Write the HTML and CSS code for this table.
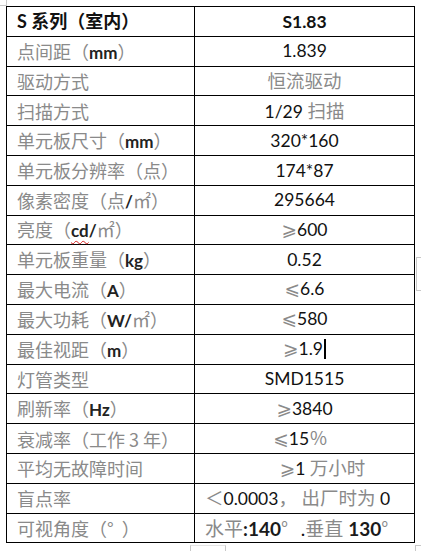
FILE: index.html
```html
<!DOCTYPE html>
<html lang="zh-CN">
<head>
<meta charset="utf-8">
<title>S 系列（室内）</title>
<link rel="stylesheet" href="styles.css">
</head>
<body>
<div class="page">
  <span class="handle"></span>
  <table class="spec">
    <colgroup><col class="c1"><col class="c2"></colgroup>
    <tr><td class="k head">S 系列（室内）</td><td class="v head">S1.83</td></tr>
    <tr><td class="k">点间距（<span class="en">mm</span>）</td><td class="v">1.839</td></tr>
    <tr><td class="k">驱动方式</td><td class="v"><span class="g">恒流驱动</span></td></tr>
    <tr><td class="k">扫描方式</td><td class="v">1/29 <span class="g">扫描</span></td></tr>
    <tr><td class="k">单元板尺寸（<span class="en">mm</span>）</td><td class="v">320*160</td></tr>
    <tr><td class="k">单元板分辨率（点）</td><td class="v">174*87</td></tr>
    <tr><td class="k">像素密度（点<span class="en">/</span>㎡）</td><td class="v">295664</td></tr>
    <tr><td class="k">亮度（<span class="en"><span class="spell">cd</span>/</span>㎡）</td><td class="v"><span class="g sym">⩾</span>600</td></tr>
    <tr><td class="k">单元板重量（<span class="en">kg</span>）</td><td class="v">0.52</td></tr>
    <tr><td class="k">最大电流（<span class="en">A</span>）</td><td class="v"><span class="g sym">⩽</span>6.6</td></tr>
    <tr><td class="k">最大功耗（<span class="en">W/</span>㎡）</td><td class="v"><span class="g sym">⩽</span>580</td></tr>
    <tr><td class="k">最佳视距（<span class="en">m</span>）</td><td class="v"><span class="g sym">⩾</span>1.9<span class="caret"></span></td></tr>
    <tr><td class="k">灯管类型</td><td class="v">SMD1515</td></tr>
    <tr><td class="k">刷新率（<span class="en">Hz</span>）</td><td class="v"><span class="g sym">⩾</span>3840</td></tr>
    <tr><td class="k">衰减率（工作 3 年）</td><td class="v shift-l"><span class="g sym">⩽</span>15<span class="g">％</span></td></tr>
    <tr><td class="k">平均无故障时间</td><td class="v shift-r"><span class="g sym">⩾</span>1 <span class="g">万小时</span></td></tr>
    <tr><td class="k">盲点率</td><td class="v tight"><span class="g">＜</span>0.0003<span class="g">，</span> <span class="g">出厂时为</span> 0</td></tr>
    <tr><td class="k">可视角度（°&nbsp;&nbsp;）</td><td class="v tight wide"><span class="g">水平</span><b>:140</b><span class="g">°&nbsp;&nbsp;&nbsp;</span>.<span class="g">垂直</span> <b>130</b><span class="g">°</span></td></tr>
  </table>
  <span class="mark-bottom"></span>
  <span class="mark-right"></span>
  <span class="mark-corner"></span>
</div>
</body>
</html>
```

FILE: styles.css
```css
html, body {
  margin: 0;
  padding: 0;
  background: #ffffff;
}

.page {
  position: relative;
  width: 421px;
  height: 551px;
  overflow: hidden;
  padding: 6px 0 0 6px;
  box-sizing: border-box;
}

.spec {
  border-collapse: collapse;
  table-layout: fixed;
  width: 408px;
  font-family: "Lato", "Noto Sans CJK SC", sans-serif;
  font-size: 17.5px;
  color: #111111;
}

.c1 {
  width: 188px;
}

.c2 {
  width: 220px;
}

.spec td {
  border: 1px solid #000000;
  height: 28.8px;
  padding: 0;
  vertical-align: middle;
  white-space: nowrap;
  line-height: 1;
}

.k {
  padding-left: 10px !important;
  font-family: "Noto Sans CJK SC", sans-serif;
  font-size: 18px;
  color: #8a8a8a;
}

.v {
  text-align: center;
}

.head {
  font-weight: bold;
  color: #111111;
}

.k.head {
  font-family: "Lato", "Noto Sans CJK SC", sans-serif;
}

.en {
  font-family: "Lato", sans-serif;
  font-size: 17px;
  font-weight: bold;
  color: #222222;
}

.g {
  font-family: "Noto Sans CJK SC", sans-serif;
  font-size: 18.5px;
  color: #8a8a8a;
}

.sym {
  font-family: "DejaVu Sans", "Noto Sans CJK SC", sans-serif;
  font-weight: normal;
}

.shift-l {
  padding-right: 8px !important;
}

.shift-r {
  padding-left: 36px !important;
}

.tight {
  text-align: left;
  padding-left: 10px !important;
}

.wide {
  font-size: 19px;
}

.wide .g {
  font-size: 19px;
}

.wide b {
  font-weight: bold;
  color: #1a1a1a;
}

.spell {
  text-decoration: underline wavy #d42020;
  text-decoration-thickness: 1px;
  text-underline-offset: 3px;
  text-decoration-skip-ink: none;
}

.caret {
  display: inline-block;
  width: 2px;
  height: 20px;
  background: #000000;
  vertical-align: -4px;
  margin-left: 1px;
}

.handle {
  position: absolute;
  left: 0;
  top: 0;
  width: 6px;
  height: 5px;
  border-right: 1px solid #c8c8c8;
  border-bottom: 1px solid #c8c8c8;
}

.mark-bottom {
  position: absolute;
  left: 190px;
  top: 545px;
  width: 34px;
  height: 8px;
  border-left: 1px solid #c8c8c8;
  border-right: 1px solid #c8c8c8;
  border-top: 1px solid #e4e4e4;
}

.mark-right {
  position: absolute;
  left: 416px;
  top: 257px;
  width: 6px;
  height: 32px;
  border-left: 1px solid #c8c8c8;
  border-top: 1px solid #c8c8c8;
  border-bottom: 1px solid #c8c8c8;
}

.mark-corner {
  position: absolute;
  left: 415px;
  top: 545px;
  width: 6px;
  height: 6px;
  border: 1px solid #c8c8c8;
}
```
